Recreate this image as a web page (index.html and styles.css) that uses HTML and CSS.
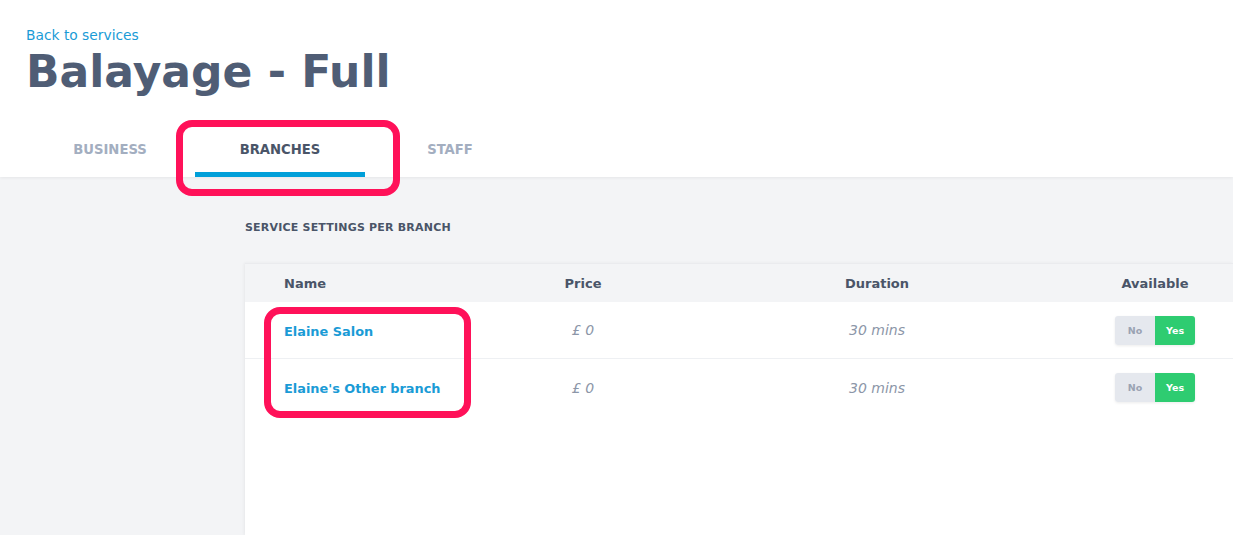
FILE: index.html
```html
<!DOCTYPE html>
<html>
<head>
<meta charset="utf-8">
<link rel="stylesheet" href="styles.css">
</head>
<body>
<header class="top">
  <a class="back" href="#">Back to services</a>
  <h1 class="title">Balayage - Full</h1>
  <nav class="tabs">
    <div class="tab">BUSINESS</div>
    <div class="tab active">BRANCHES</div>
    <div class="tab">STAFF</div>
  </nav>
</header>
<main class="main">
  <h2 class="section">SERVICE SETTINGS PER BRANCH</h2>
  <div class="card">
    <div class="row head">
      <div class="c-name">Name</div>
      <div class="c-mid">Price</div>
      <div class="c-mid">Duration</div>
      <div class="c-mid">Available</div>
    </div>
    <div class="row">
      <div class="c-name"><a class="branch" href="#">Elaine Salon</a></div>
      <div class="c-mid val">£ 0</div>
      <div class="c-mid val">30 mins</div>
      <div class="c-mid"><div class="toggle"><span class="no">No</span><span class="yes">Yes</span></div></div>
    </div>
    <div class="row">
      <div class="c-name"><a class="branch" href="#">Elaine's Other branch</a></div>
      <div class="c-mid val">£ 0</div>
      <div class="c-mid val">30 mins</div>
      <div class="c-mid"><div class="toggle"><span class="no">No</span><span class="yes">Yes</span></div></div>
    </div>
  </div>
</main>
<div class="mark mark-tab"></div>
<div class="mark mark-names"></div>
</body>
</html>
```
FILE: styles.css
```css
* { box-sizing: border-box; }
html, body { margin: 0; padding: 0; }
body {
  font-family: "DejaVu Sans", "Liberation Sans", sans-serif;
  background: #f3f4f6;
  color: #4a5568;
  width: 1233px;
  height: 535px;
  overflow: hidden;
  position: relative;
}
.top {
  background: #fff;
  padding: 26px 0 0 26px;
  box-shadow: 0 1px 3px rgba(0,0,0,0.06);
  position: relative;
  z-index: 1;
}
.back {
  display: block;
  color: #1a9bd6;
  text-decoration: none;
  font-size: 13.8px;
  line-height: 18px;
}
.title {
  margin: 0;
  font-size: 44px;
  line-height: 56px;
  font-weight: bold;
  color: #4f5d75;
}
.tabs {
  display: flex;
  margin-top: 20px;
  margin-left: -1px;
}
.tab {
  width: 170px;
  text-align: center;
  padding: 21px 0 13px;
  line-height: 18px;
  font-size: 13.2px;
  font-weight: bold;
  color: #a3aec0;
  border-bottom: 5px solid transparent;
}
.tab.active {
  color: #4a5568;
  border-bottom-color: #009fd9;
}
.main {
  padding: 43px 0 0 245px;
}
.section {
  margin: 0;
  font-size: 11px;
  line-height: 16px;
  font-weight: bold;
  color: #4a5568;
  letter-spacing: 0.2px;
}
.card {
  margin-top: 27px;
  background: #fff;
  height: 272px;
  box-shadow: -1px 0 3px rgba(0,0,0,0.05);
}
.row {
  display: grid;
  grid-template-columns: 216px 166px 422px 134px;
  padding-left: 39px;
  align-items: center;
  height: 57px;
  border-bottom: 1px solid #eef0f3;
}
.row.head {
  height: 39px;
  background: #f3f4f6;
  border-top: 1px solid #eaebee;
  border-bottom: none;
  font-weight: bold;
  font-size: 13px;
  color: #4a5568;
}
.row:last-child { border-bottom: none; }
.c-mid { text-align: center; display: flex; justify-content: center; }
.branch {
  color: #1a9bd6;
  text-decoration: none;
  font-weight: bold;
  font-size: 12.9px;
}
.val {
  font-style: italic;
  color: #8c96a8;
  font-size: 14px;
}
.toggle {
  display: flex;
  height: 29px;
  border-radius: 3px;
  overflow: hidden;
  box-shadow: 0 1px 3px rgba(0,0,0,0.08);
  font-size: 9.5px;
  font-weight: bold;
}
.toggle span {
  width: 40px;
  display: flex;
  align-items: center;
  justify-content: center;
}
.no { background: #e5e8ee; color: #9aa3b3; }
.yes { background: #2ecc71; color: #fff; }
.mark {
  position: absolute;
  border: 7px solid #ff1159;
  border-radius: 16px;
  z-index: 5;
  pointer-events: none;
}
.mark-tab { left: 176px; top: 120px; width: 224px; height: 76px; }
.mark-names { left: 264px; top: 307px; width: 207px; height: 111px; }
```
